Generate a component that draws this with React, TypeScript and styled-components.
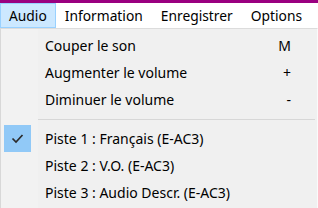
import React from "react";
import styled, { createGlobalStyle } from "styled-components";

const Global = createGlobalStyle`
  html, body {
    margin: 0;
    padding: 0;
    background: #f0f0f0;
  }
  body {
    font-family: "Noto Sans", "Open Sans", sans-serif;
    font-size: 14px;
    color: #000;
  }
`;

const Window = styled.div`
  width: 318px;
  height: 208px;
  overflow: hidden;
  display: flex;
  flex-direction: column;
  background: #f0f0f0;
`;

const TitleStrip = styled.div`
  height: 3px;
  background: #9a0080;
`;

const MenuBar = styled.div`
  display: flex;
  height: 25px;
  background: #ffffff;
  font-size: 13.8px;
`;

const MenuButton = styled.div<{ $active?: boolean }>`
  display: flex;
  align-items: center;
  padding: 0 8px;
  border: 1px solid ${(p) => (p.$active ? "#99d1ff" : "transparent")};
  background: ${(p) => (p.$active ? "#cce8ff" : "transparent")};
  white-space: nowrap;
`;

const Dropdown = styled.div`
  flex: 1;
  display: flex;
  flex-direction: column;
  border-top: 1px solid #dcdcdc;
  border-left: 1px solid #d8d8d8;
  border-right: 1px solid #fafafa;
  padding-top: 3px;
  background: linear-gradient(to right, #f2f2f2 0, #f2f2f2 37px, #f0f0f0 37px);
`;

const Row = styled.div`
  display: flex;
  align-items: center;
  height: 27px;
  flex-shrink: 0;
`;

const Gutter = styled.div`
  width: 44px;
  height: 100%;
  display: flex;
  align-items: center;
  padding-left: 3px;
  box-sizing: border-box;
`;

const Check = styled.div<{ $on?: boolean }>`
  width: 27px;
  height: 27px;
  display: flex;
  align-items: center;
  justify-content: center;
  background: ${(p) => (p.$on ? "#91c9f7" : "transparent")};
`;

const Label = styled.div`
  flex: 1;
  white-space: nowrap;
`;

const Shortcut = styled.div`
  width: 40px;
  text-align: right;
  padding-right: 26px;
`;

const Separator = styled.div`
  height: 1px;
  flex-shrink: 0;
  background: #d7d7d7;
  margin: 6px 2px 5px 37px;
`;

type Item = { label: string; key?: string; checked?: boolean };

const volume: Item[] = [
  { label: "Couper le son", key: "M" },
  { label: "Augmenter le volume", key: "+" },
  { label: "Diminuer le volume", key: "-" },
];

const tracks: Item[] = [
  { label: "Piste 1 : Français (E-AC3)", checked: true },
  { label: "Piste 2 : V.O. (E-AC3)" },
  { label: "Piste 3 : Audio Descr. (E-AC3)" },
];

const menus = ["Audio", "Information", "Enregistrer", "Options"];

const CheckMark = () => (
  <svg width="13" height="11" viewBox="0 0 13 11">
    <path d="M1.5 5.5 L5 9 L11.5 2" fill="none" stroke="#2b2b2b" strokeWidth="1.7" />
  </svg>
);

const MenuRow: React.FC<{ item: Item }> = ({ item }) => (
  <Row>
    <Gutter>
      <Check $on={item.checked}>{item.checked && <CheckMark />}</Check>
    </Gutter>
    <Label>{item.label}</Label>
    <Shortcut>{item.key}</Shortcut>
  </Row>
);

export default function App() {
  return (
    <Window>
      <Global />
      <TitleStrip />
      <MenuBar>
        {menus.map((m, i) => (
          <MenuButton key={m} $active={i === 0}>
            {m}
          </MenuButton>
        ))}
      </MenuBar>
      <Dropdown>
        {volume.map((i) => (
          <MenuRow key={i.label} item={i} />
        ))}
        <Separator />
        {tracks.map((i) => (
          <MenuRow key={i.label} item={i} />
        ))}
      </Dropdown>
    </Window>
  );
}
